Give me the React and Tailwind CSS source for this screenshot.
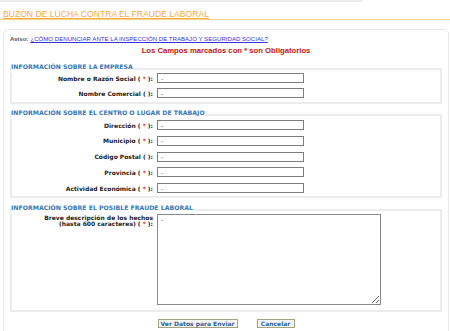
import React from 'react';

const verdana = { fontFamily: '"DejaVu Sans", Verdana, sans-serif' };
const arial = { fontFamily: '"Liberation Sans", Arial, sans-serif' };

const Req = () => <span className="text-[#e0202a]">*</span>;

const Field = ({ label, required }) => (
  <div className="flex items-center h-[10px]">
    <div className="w-[141px] text-right text-[6px] leading-[7px] font-bold text-[#1c1c1c] whitespace-nowrap" style={verdana}>
      {label} ( {required ? <Req /> : ' '} ):
    </div>
    <input
      type="text"
      defaultValue="-"
      className="ml-[4px] w-[147px] h-[10px] border border-[#7d7d7d] bg-white px-[3px] text-[6px] leading-[8px] text-[#444] outline-none"
      style={verdana}
    />
  </div>
);

const Section = ({ title, children, className }) => (
  <fieldset className={`border-2 border-[#ececec] px-0 ${className}`}>
    <legend className="ml-[-1px] text-[6.2px] leading-[6px] pb-[3px] font-bold text-[#3a78b6] whitespace-nowrap" style={verdana}>
      {title}
    </legend>
    {children}
  </fieldset>
);

export default function App() {
  return (
    <div className="w-[450px] h-[331px] overflow-hidden bg-white">
      <div className="w-[362px] h-[2px] bg-[#ebebeb]" />
      <div className="h-[17px] flex items-end pl-[3px]">
        <a href="#" className="text-[8.6px] leading-[9px] text-[#f5a93a] underline" style={arial}>
          BUZÓN DE LUCHA CONTRA EL FRAUDE LABORAL
        </a>
      </div>
      <div className="h-px bg-[#fcd485]" />

      <div className="mt-[9px] ml-[3px] mr-[1px] h-[320px] border border-[#e6e6e6] rounded-[5px] px-[6px]">
        <div className="mt-[5px] h-[8px] flex items-center text-[6.1px] leading-[8px]" style={arial}>
          <span className="font-bold text-[#555]">Aviso:</span>
          <a href="#" className="ml-[2px] text-[#3333dd] underline">
            ¿CÓMO DENUNCIAR ANTE LA INSPECCIÓN DE TRABAJO Y SEGURIDAD SOCIAL?
          </a>
        </div>
        <div className="mt-[3px] text-center text-[7.7px] leading-[9px] font-bold text-[#cc1010]" style={arial}>
          Los Campos marcados con * son Obligatorios
        </div>

        <Section title="INFORMACIÓN SOBRE LA EMPRESA" className="mt-[9px] pb-[4px]">
          <div className="flex flex-col gap-[5px]">
            <Field label="Nombre o Razón Social" required />
            <Field label="Nombre Comercial" />
          </div>
        </Section>

        <Section title="INFORMACIÓN SOBRE EL CENTRO O LUGAR DE TRABAJO" className="mt-[6px] pt-[1px] pb-[3px]">
          <div className="flex flex-col gap-[5.75px]">
            <Field label="Dirección" required />
            <Field label="Municipio" required />
            <Field label="Código Postal" />
            <Field label="Provincia" required />
            <Field label="Actividad Económica" required />
          </div>
        </Section>

        <Section title="INFORMACIÓN SOBRE EL POSIBLE FRAUDE LABORAL" className="mt-[7px] pb-[5px]">
          <div className="flex items-start">
            <div className="w-[141px] pt-[1px] text-right text-[6px] leading-[6px] font-bold text-[#1c1c1c]" style={verdana}>
              Breve descripción de los hechos
              <br />
              (hasta 600 caracteres) ( <Req /> ):
            </div>
            <textarea
              defaultValue="-"
              className="ml-[4px] w-[224px] h-[91px] border border-[#8a8a8a] bg-white px-[3px] py-[1px] text-[6px] leading-[8px] text-[#444] outline-none"
              style={verdana}
            />
          </div>
        </Section>

        <div className="mt-[7px] flex justify-center gap-[19px]">
          <button className="h-[9px] w-[80px] border border-[#a3a47d] bg-[#f6f6f0] text-[6px] leading-[7px] font-bold text-[#2a62a0]" style={verdana}>
            Ver Datos para Enviar
          </button>
          <button className="h-[9px] w-[38px] border border-[#a3a47d] bg-[#f6f6f0] text-[6px] leading-[7px] font-bold text-[#2a62a0]" style={verdana}>
            Cancelar
          </button>
        </div>
      </div>
    </div>
  );
}
